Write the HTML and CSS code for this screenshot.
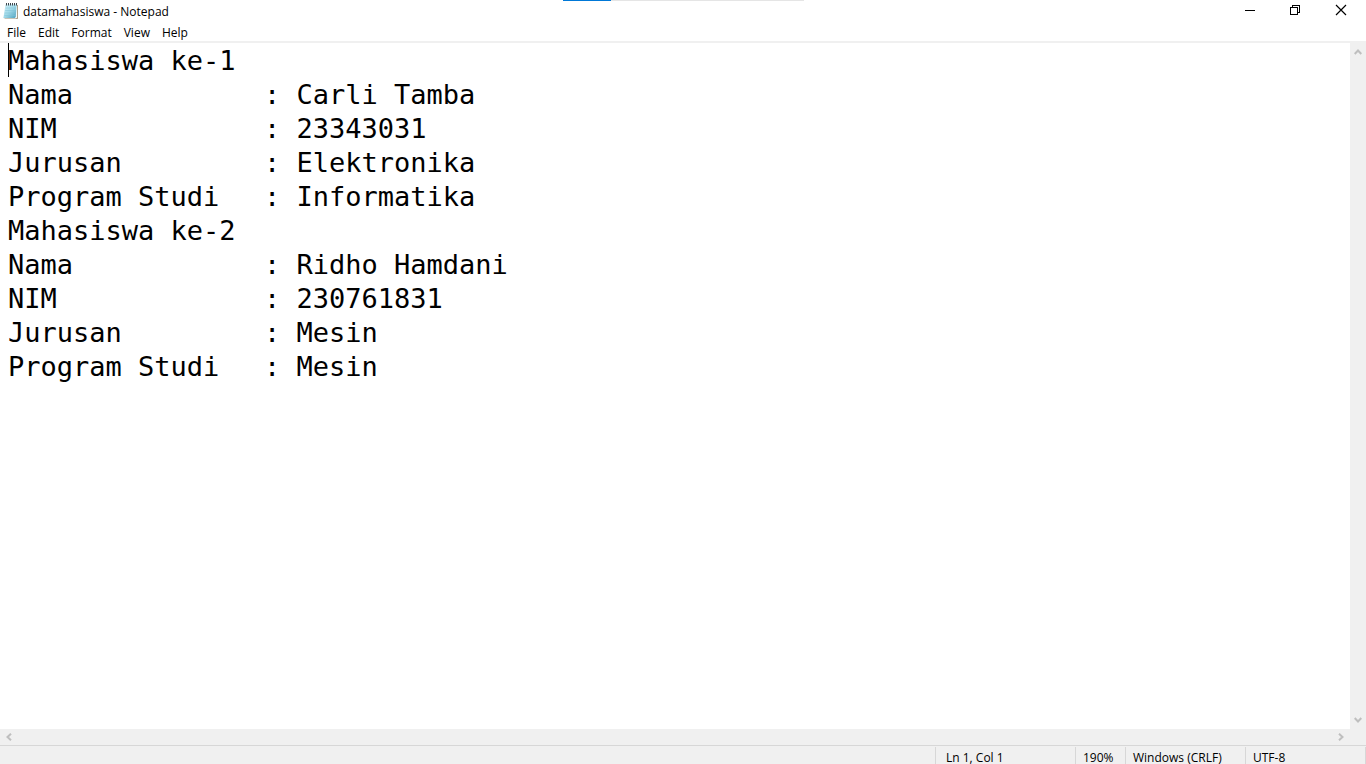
FILE: index.html
```html
<!DOCTYPE html>
<html lang="en">
<head>
<meta charset="utf-8">
<title>datamahasiswa - Notepad</title>
<link rel="stylesheet" href="styles.css">
</head>
<body>
<div class="window">
  <div class="share-bar"></div>
  <header class="titlebar">
    <svg class="app-icon" width="16" height="18" viewBox="0 0 16 18" aria-hidden="true">
      <defs>
        <linearGradient id="page" x1="0" y1="0" x2="1" y2="1">
          <stop offset="0" stop-color="#d8f3fa"/>
          <stop offset=".5" stop-color="#9fd8e8"/>
          <stop offset="1" stop-color="#4b9fbd"/>
        </linearGradient>
      </defs>
      <path d="M2.5 3H15V16.5L14 17H1.5Z" fill="#9b8c72"/>
      <path d="M2.5 2.5H14.2V15.5L13.2 16.4H0L1 14.5Z" fill="#f3f9fb"/>
      <path d="M2.5 2.5H13.6L12.8 14.8L11.8 16H.4Z" fill="url(#page)"/>
      <path d="M2.6 6H13M2.2 8.5H12.8M1.8 11H12.6M1.4 13.5H12.4" stroke="#7fc3d6" stroke-width=".5"/>
      <path d="M3.5 1V3.5M5.5 1V3.5M7.5 1V3.5M9.5 1V3.5M11.5 1V3.5M13.5 1V3.5" stroke="#3d474e" stroke-width="1"/>
    </svg>
    <h1 class="title">datamahasiswa - Notepad</h1>
    <div class="window-buttons">
      <button class="window-button" type="button" aria-label="Minimize">
        <svg width="12" height="12" viewBox="0 0 12 12" shape-rendering="crispEdges"><path d="M2 6.5H12" stroke="#000"/></svg>
      </button>
      <button class="window-button" type="button" aria-label="Restore">
        <svg width="12" height="12" viewBox="0 0 12 12" shape-rendering="crispEdges"><path d="M1.5 3.5H8.5V10.5H1.5ZM3.5 3V1.5H10.5V8.5H9" fill="none" stroke="#000"/></svg>
      </button>
      <button class="window-button" type="button" aria-label="Close">
        <svg width="12" height="12" viewBox="0 0 12 12"><path d="M1 1L11 11M11 1L1 11" stroke="#000" stroke-width="1.2"/></svg>
      </button>
    </div>
  </header>
  <nav class="menubar" aria-label="Menu">
    <button class="menu" type="button">File</button>
    <button class="menu" type="button">Edit</button>
    <button class="menu" type="button">Format</button>
    <button class="menu" type="button">View</button>
    <button class="menu" type="button">Help</button>
  </nav>
  <main class="workspace">
    <div class="editor">
      <span class="caret"></span>
      <textarea class="text" aria-label="Text editor" spellcheck="false" wrap="off">Mahasiswa ke-1
Nama&#9;&#9;: Carli Tamba
NIM&#9;&#9;: 23343031
Jurusan&#9;&#9;: Elektronika
Program Studi&#9;: Informatika
Mahasiswa ke-2
Nama&#9;&#9;: Ridho Hamdani
NIM&#9;&#9;: 230761831
Jurusan&#9;&#9;: Mesin
Program Studi&#9;: Mesin</textarea>
    </div>
    <div class="scroll scroll-vertical">
      <button class="scroll-button" type="button" aria-label="Scroll up"><svg width="8" height="8" viewBox="0 0 8 8"><path d="M.7 6L4 2.5L7.3 6" class="chevron"/></svg></button>
      <button class="scroll-button" type="button" aria-label="Scroll down"><svg width="8" height="8" viewBox="0 0 8 8"><path d="M.7 2L4 5.5L7.3 2" class="chevron"/></svg></button>
    </div>
    <div class="scroll scroll-horizontal">
      <button class="scroll-button" type="button" aria-label="Scroll left"><svg width="8" height="8" viewBox="0 0 8 8"><path d="M6 .7L2.5 4L6 7.3" class="chevron"/></svg></button>
      <button class="scroll-button" type="button" aria-label="Scroll right"><svg width="8" height="8" viewBox="0 0 8 8"><path d="M2 .7L5.5 4L2 7.3" class="chevron"/></svg></button>
    </div>
  </main>
  <footer class="statusbar">
    <span class="status status-position">Ln 1, Col 1</span>
    <span class="status status-zoom">190%</span>
    <span class="status status-format">Windows (CRLF)</span>
    <span class="status status-format">UTF-8</span>
  </footer>
</div>
</body>
</html>
```
FILE: styles.css
```css
* {
  box-sizing: border-box;
}

body {
  margin: 0;
  background: #fff;
  color: #000;
  font: 12px/16px "Segoe UI", "Open Sans", sans-serif;
}

button {
  margin: 0;
  padding: 0;
  border: 0;
  background: none;
  color: inherit;
  font: inherit;
}

.window {
  position: relative;
  display: flex;
  flex-direction: column;
  height: 100vh;
  overflow: hidden;
}

.share-bar {
  position: absolute;
  top: 0;
  left: 50%;
  width: 241px;
  height: 1px;
  margin-left: -120px;
  background: linear-gradient(to right, #0078d7 48px, #e5e5e5 48px);
}

.titlebar {
  display: flex;
  align-items: center;
  gap: 4px;
  height: 22px;
  padding-left: 3px;
}

.title {
  flex: 1;
  margin: 0;
  padding-top: 2px;
  font-size: 12px;
  font-weight: 400;
}

.window-buttons {
  display: flex;
  align-self: stretch;
  padding-right: 2px;
}

.window-button {
  display: flex;
  align-items: center;
  justify-content: center;
  width: 46px;
  height: 20px;
}

.menubar {
  display: flex;
  gap: 12px;
  height: 21px;
  padding: 3px 7px 0;
  border-bottom: 2px solid #f0f0f0;
}

.workspace {
  flex: 1;
  display: grid;
  grid-template: minmax(0, 1fr) 16px / minmax(0, 1fr) 16px;
  min-height: 0;
  background: #f0f0f0;
}

.editor {
  position: relative;
  background: #fff;
}

.text {
  display: block;
  width: 100%;
  height: 100%;
  padding: 1px 8px;
  border: 0;
  outline: 0;
  resize: none;
  overflow: hidden;
  background: none;
  color: #000;
  font: 27px/34px Consolas, "DejaVu Sans Mono", monospace;
  tab-size: 128px;
}

.caret {
  position: absolute;
  top: 0;
  left: 8px;
  width: 1px;
  height: 34px;
  background: #000;
}

.scroll {
  display: flex;
  justify-content: space-between;
}

.scroll-vertical {
  flex-direction: column;
}

.scroll-button {
  display: flex;
  align-items: center;
  justify-content: center;
  width: 16px;
  height: 18px;
}

.scroll-horizontal .scroll-button {
  width: 18px;
  height: 16px;
}

.chevron {
  fill: none;
  stroke: #bfbfbf;
  stroke-width: 2;
}

.statusbar {
  display: flex;
  justify-content: flex-end;
  height: 19px;
  padding-top: 1px;
  border-top: 1px solid #d7d7d7;
  background: #f0f0f0;
}

.status {
  padding: 5px 7px 0;
  border-left: 1px solid #d7d7d7;
  line-height: 12px;
  white-space: nowrap;
}

.status-position {
  width: 140px;
  padding-left: 10px;
}

.status-zoom {
  width: 50px;
}

.status-format {
  width: 120px;
}

.status:last-child {
  width: 121px;
  border-right: 1px solid #d7d7d7;
}
```
